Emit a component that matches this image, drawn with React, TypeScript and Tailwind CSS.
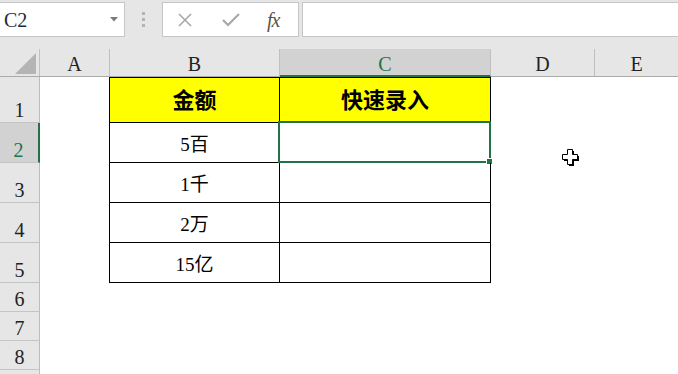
import React from "react";

const serif = "font-['Liberation_Serif','Noto_Sans_CJK_SC',serif]";

type Row = { n: string; h: string; b?: string; c?: string; head?: boolean; sel?: boolean; table?: boolean };

const rows: Row[] = [
  { n: "1", h: "h-[46px]", b: "金额", c: "快速录入", head: true, table: true },
  { n: "2", h: "h-[40px]", b: "5百", c: "", sel: true, table: true },
  { n: "3", h: "h-[40px]", b: "1千", c: "", table: true },
  { n: "4", h: "h-[40px]", b: "2万", c: "", table: true },
  { n: "5", h: "h-[40px]", b: "15亿", c: "", table: true },
  { n: "6", h: "h-[29px]" },
  { n: "7", h: "h-[29px]" },
  { n: "8", h: "h-[29px]" },
  { n: "", h: "h-[29px]" },
];

function Cursor() {
  return (
    <svg className="absolute left-[562px] top-[149px]" width="18" height="18" viewBox="0 0 18 18">
      <path d="M6 1h5v5h5v5h-5v5H6v-5H1V6h5z" fill="#000" transform="translate(1,1)" />
      <path d="M5.5 0.5h5v5h5v5h-5v5h-5v-5h-5v-5h5z" fill="#fff" stroke="#000" strokeWidth="1" />
    </svg>
  );
}

export default function App() {
  return (
    <div className={`relative w-[678px] h-[374px] overflow-hidden bg-white ${serif}`}>
      {/* formula bar */}
      <div className="h-[49px] bg-[#e6e6e6] flex items-start pt-[2px]">
        <div className="w-[125px] h-[35px] bg-white border border-l-0 border-[#c6c6c6] flex items-center justify-between pl-[4px] pr-[6px]">
          <span className="text-[20px] leading-none text-[#1e2a3a]">C2</span>
          <svg width="8" height="5" viewBox="0 0 8 5">
            <path d="M0 0h8L4 4.5z" fill="#7a7a7a" />
          </svg>
        </div>
        <div className="w-[37px] h-[35px] flex flex-col items-center justify-center gap-[3px]">
          <div className="w-[3px] h-[3px] bg-[#b4b4b4]" />
          <div className="w-[3px] h-[3px] bg-[#b4b4b4]" />
          <div className="w-[3px] h-[3px] bg-[#b4b4b4]" />
        </div>
        <div className="w-[137px] h-[35px] bg-white border border-[#c6c6c6] flex items-center pl-[14px]">
          <svg width="16" height="14" viewBox="0 0 16 14">
            <path d="M2 1l12 12M14 1L2 13" stroke="#a8a8a8" strokeWidth="1.6" fill="none" />
          </svg>
          <svg className="ml-[29px]" width="18" height="14" viewBox="0 0 18 14">
            <path d="M1 7l5 5L17 1" stroke="#a8a8a8" strokeWidth="2.2" fill="none" />
          </svg>
          <span className="ml-[27px] italic text-[20px] leading-none text-[#555] tracking-[-1px]">fx</span>
        </div>
        <div className="ml-[3px] flex-1 h-[35px] bg-white border border-r-0 border-[#c6c6c6]" />
      </div>

      {/* column headers */}
      <div className="h-[28px] flex bg-[#e6e6e6] border-b border-[#ababab] text-[20px] leading-none text-[#222]">
        <div className="w-[40px] border-r border-[#c0c0c0] relative">
          <svg className="absolute left-[15px] top-[4px]" width="21" height="21" viewBox="0 0 21 21">
            <path d="M21 0V21H0z" fill="#b4b4b4" />
          </svg>
        </div>
        <div className="w-[70px] border-r border-[#c0c0c0] flex items-end justify-center pb-[2px]">A</div>
        <div className="w-[170px] border-r border-[#c0c0c0] flex items-end justify-center pb-[2px]">B</div>
        <div className="w-[211px] bg-[#d2d2d2] border-r border-[#c0c0c0] flex items-end justify-center pb-[1px] text-[#217346] -mb-[1px] border-b-2 border-b-[#217346]">C</div>
        <div className="w-[104px] border-r border-[#c0c0c0] flex items-end justify-center pb-[2px]">D</div>
        <div className="flex-1 flex items-end justify-center pb-[2px]">E</div>
      </div>

      {/* rows */}
      {rows.map((r, i) => (
        <div key={i} className={`flex ${r.h}`}>
          <div
            className={`w-[40px] border-b border-[#c4c4c4] flex items-end justify-center pb-[2px] text-[20px] leading-none ${
              r.sel ? "bg-[#d2d2d2] text-[#217346] border-r-2 border-r-[#217346] pr-[1px]" : "bg-[#e6e6e6] text-[#222] border-r border-r-[#bcbcbc]"
            }`}
          >
            {r.n}
          </div>
          <div className="w-[69px]" />
          {r.table ? (
            <>
              <div
                className={`w-[171px] border-l border-r border-b border-black flex items-end justify-center ${
                  r.head ? "border-t bg-[#ffff00] font-bold text-[22px] pb-[10px]" : "text-[19px] pb-[8px]"
                } leading-none text-black`}
              >
                {r.b}
              </div>
              <div
                className={`relative w-[211px] border-r border-b border-black flex items-end justify-center ${
                  r.head ? "border-t bg-[#ffff00] font-bold text-[22px] pb-[10px]" : "text-[19px] pb-[8px]"
                } leading-none text-black`}
              >
                {r.c}
                {r.sel && (
                  <div className="absolute -left-[2px] -top-[2px] -right-[1px] -bottom-[1px] border-2 border-[#217346]">
                    <div className="absolute -right-[4px] -bottom-[4px] w-[7px] h-[7px] bg-[#217346] border border-white" />
                  </div>
                )}
              </div>
            </>
          ) : null}
        </div>
      ))}

      <Cursor />
    </div>
  );
}
